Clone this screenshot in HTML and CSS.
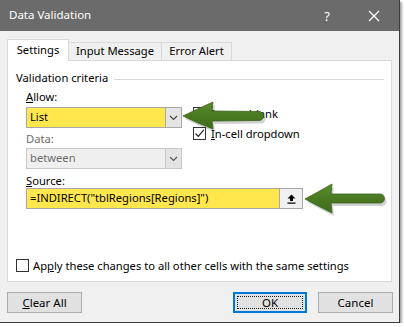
FILE: index.html
```html
<!DOCTYPE html>
<html lang="en">
<head>
  <meta charset="UTF-8" />
  <title>Data Validation</title>
  <link rel="stylesheet" href="styles.css">
</head>
<body>
  <div class="dialog">
    <div class="titlebar">
      <span class="title">Data Validation</span>
      <span class="help">?</span>
      <svg class="close" width="12" height="12" viewBox="0 0 12 12">
        <path d="M1 1 L11 11 M11 1 L1 11" stroke="#fff" stroke-width="1.3" fill="none" />
      </svg>
    </div>

    <div class="content">
      <div class="tabs">
        <div class="tab active">Settings</div>
        <div class="tab">Input Message</div>
        <div class="tab">Error Alert</div>
      </div>

      <div class="panel">
        <div class="group-title">Validation criteria</div>

        <div class="criteria">
          <div class="fields">
            <div class="label"><u>A</u>llow:</div>
            <div class="combo yellow">
              <span class="value">List</span>
              <span class="drop">
                <svg width="9" height="6" viewBox="0 0 9 6"><path d="M1 1 L4.5 4.5 L8 1" stroke="#444" stroke-width="1.1" fill="none" /></svg>
              </span>
            </div>

            <div class="label disabled label-data">Data:</div>
            <div class="combo grey">
              <span class="value">between</span>
              <span class="drop">
                <svg width="9" height="6" viewBox="0 0 9 6"><path d="M1 1 L4.5 4.5 L8 1" stroke="#555" stroke-width="1.1" fill="none" /></svg>
              </span>
            </div>

            <div class="label label-source"><u>S</u>ource:</div>
            <div class="source">
              <span class="value">=INDIRECT("tblRegions[Regions]")</span>
              <span class="pick">
                <svg width="9" height="10" viewBox="0 0 9 10"><path d="M4.5 0.5 L8.5 4.5 L6 4.5 L6 7 L3 7 L3 4.5 L0.5 4.5 Z M0.5 8.5 L8.5 8.5 L8.5 9.8 L0.5 9.8 Z" fill="#000" /></svg>
              </span>
            </div>
          </div>

          <div class="options">
            <div class="check-row">
              <span class="box checked">
                <svg width="11" height="11" viewBox="0 0 11 11"><path d="M1.5 5.5 L4.3 8.3 L9.8 1.8" stroke="#222" stroke-width="1.2" fill="none" /></svg>
              </span>
              <span>Ignore <u>b</u>lank</span>
            </div>
            <div class="check-row">
              <span class="box checked">
                <svg width="11" height="11" viewBox="0 0 11 11"><path d="M1.5 5.5 L4.3 8.3 L9.8 1.8" stroke="#222" stroke-width="1.2" fill="none" /></svg>
              </span>
              <span><u>I</u>n-cell dropdown</span>
            </div>
          </div>
        </div>

        <div class="check-row apply">
          <span class="box"></span>
          <span>Ap<u>p</u>ly these changes to all other cells with the same settings</span>
        </div>
      </div>

      <div class="buttons">
        <button class="btn"><u>C</u>lear All</button>
        <div class="right-buttons">
          <button class="btn default">OK</button>
          <button class="btn">Cancel</button>
        </div>
      </div>
    </div>

    <!-- green callout arrows -->
    <svg class="arrow arrow-allow" width="90" height="34" viewBox="0 0 90 34">
      <defs>
        <linearGradient id="g1" x1="0" y1="0" x2="0" y2="1">
          <stop offset="0" stop-color="#5b8a2e" />
          <stop offset="0.5" stop-color="#4a7a22" />
          <stop offset="1" stop-color="#3f6a1c" />
        </linearGradient>
      </defs>
      <path d="M4 17 Q18 10 34 3 L33 12 L80 12.5 A4.5 4.5 0 0 1 80 21.5 L33 22 L34 30 Q18 24 4 17 Z" fill="#000" opacity="0.18" transform="translate(2 3)" />
      <path d="M4 17 Q18 10 34 3 L33 12 L80 12.5 A4.5 4.5 0 0 1 80 21.5 L33 22 L34 30 Q18 24 4 17 Z" fill="url(#g1)" stroke="#3b6319" stroke-width="0.8" />
    </svg>

    <svg class="arrow arrow-source" width="90" height="36" viewBox="0 0 90 36">
      <path d="M3 17 Q16 10 30 2 L29 12 L78 12 A4.5 4.5 0 0 1 78 21 L29 21 L30 31 Q16 24 3 17 Z" fill="#000" opacity="0.18" transform="translate(2 3)" />
      <path d="M3 17 Q16 10 30 2 L29 12 L78 12 A4.5 4.5 0 0 1 78 21 L29 21 L30 31 Q16 24 3 17 Z" fill="url(#g1)" stroke="#3b6319" stroke-width="0.8" />
    </svg>
  </div>
</body>
</html>
```

FILE: styles.css
```css
body {
  margin: 0;
  background: #fff;
  font-family: "Noto Sans", "Open Sans", sans-serif;
  font-size: 11.2px;
  color: #000;
}
.dialog {
  position: relative;
  box-sizing: border-box;
  width: 400px;
  height: 323px;
  background: #f0f0f0;
  border-right: 1px solid #3c3c3c;
  border-bottom: 1px solid #3c3c3c;
  box-shadow: 2px 2px 2px rgba(0, 0, 0, 0.35);
  white-space: nowrap;
}
.titlebar {
  display: flex;
  align-items: center;
  height: 31px;
  background: #6b6b6b;
  color: #fff;
  padding-left: 9px;
}
.title {
  flex: 1;
  font-size: 11.5px;
  line-height: 16px;
  margin-top: -1px;
}
.help {
  font-size: 13px;
  margin-right: 38px;
}
.close {
  margin-right: 19px;
}
.content {
  padding: 8px 6px 0 7px;
}
.tabs {
  display: flex;
  align-items: flex-end;
  height: 21px;
}
.tab {
  box-sizing: border-box;
  height: 18px;
  line-height: 16px;
  text-align: center;
  border: 1px solid #d9d9d9;
  border-bottom: none;
  border-left: none;
  background: #f0f0f0;
}
.tab.active {
  width: 62px;
  height: 22px;
  line-height: 19px;
  margin-bottom: -1px;
  background: #fff;
  border-left: 1px solid #d9d9d9;
  position: relative;
  z-index: 1;
}
.tab:nth-child(2) {
  width: 93px;
}
.tab:nth-child(3) {
  width: 70px;
}
.panel {
  box-sizing: border-box;
  display: flex;
  flex-direction: column;
  width: 385px;
  height: 222px;
  background: #fff;
  border: 1px solid #d9d9d9;
  padding: 9px 7px 9px 8px;
}
.group-title {
  display: flex;
  align-items: center;
  line-height: 16px;
}
.group-title::after {
  content: "";
  flex: 1;
  height: 1px;
  background: #d9d9d9;
  margin: 2px 0 0 6px;
}
.criteria {
  display: flex;
  gap: 11px;
  padding-left: 10px;
}
.fields {
  display: flex;
  flex-direction: column;
  flex-shrink: 0;
  width: 156px;
}
.label {
  line-height: 14px;
  margin-top: 4px;
}
.label-data {
  margin-top: 4px;
}
.label-source {
  margin-top: 5px;
}
.disabled {
  color: #6d6d6d;
}
.combo {
  box-sizing: border-box;
  display: flex;
  width: 156px;
  height: 21px;
  margin-top: 3px;
  border: 1px solid #a8a8a8;
}
.fields .combo.grey {
  margin-top: 2px;
  border-color: #c8c8c8;
  background: #efefef;
  color: #6d6d6d;
}
.value {
  flex: 1;
  padding-left: 3px;
  line-height: 18px;
}
.yellow .value {
  background: #ffe74d;
}
.drop {
  width: 15px;
  display: flex;
  align-items: center;
  justify-content: center;
  background: #e4e4e4;
  border-left: 1px solid #a8a8a8;
}
.grey .drop {
  border-left-color: #c8c8c8;
}
.source {
  box-sizing: border-box;
  display: flex;
  flex-shrink: 0;
  width: 277px;
  height: 21px;
  border: 1px solid #a8a8a8;
}
.source .value {
  background: #ffe74d;
}
.pick {
  width: 22px;
  display: flex;
  align-items: center;
  justify-content: center;
  background: #f0f0f0;
  border-left: 1px solid #a8a8a8;
}
.options {
  display: flex;
  flex-direction: column;
  gap: 7px;
  padding-top: 21px;
}
.check-row {
  display: flex;
  align-items: center;
  gap: 5px;
  line-height: 13px;
}
.box {
  box-sizing: border-box;
  flex-shrink: 0;
  width: 13px;
  height: 13px;
  border: 1px solid #333;
  background: #fff;
  display: flex;
  align-items: center;
  justify-content: center;
}
.apply {
  margin-top: auto;
  gap: 4px;
}
.buttons {
  display: flex;
  justify-content: space-between;
  margin-top: 10px;
}
.right-buttons {
  display: flex;
  gap: 11px;
}
.btn {
  position: relative;
  box-sizing: border-box;
  width: 75px;
  height: 21px;
  padding: 0;
  background: #e1e1e1;
  border: 1px solid #adadad;
  font-family: inherit;
  font-size: 11.5px;
  color: #000;
}
.btn.default {
  width: 74px;
  border-color: #0078d7;
  box-shadow: inset 0 0 0 1px #0078d7;
}
.btn.default::after {
  content: "";
  position: absolute;
  inset: 3px;
  border: 1px dotted #222;
}
.arrow {
  position: absolute;
}
.arrow-allow {
  left: 179px;
  top: 99px;
}
.arrow-source {
  left: 302px;
  top: 182px;
}
```
